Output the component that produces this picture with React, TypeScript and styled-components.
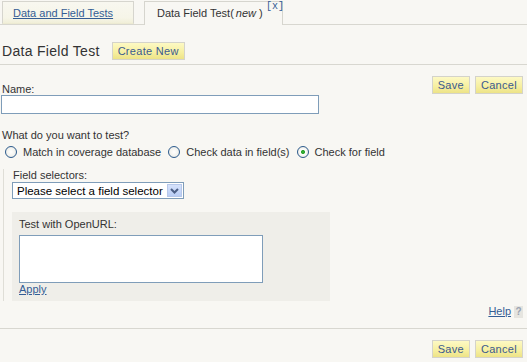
import styled, { createGlobalStyle } from 'styled-components';

const GlobalStyle = createGlobalStyle`
  html, body {
    margin: 0;
    background: #f8f7f3;
  }
  body {
    font-family: "Liberation Sans", Arial, sans-serif;
    font-size: 11px;
    color: #333;
  }
`;

const Page = styled.div`
  width: 527px;
  min-height: 362px;
`;

const TabBar = styled.div`
  display: flex;
  align-items: flex-end;
  gap: 10px;
  height: 25px;
  padding-left: 2px;
  border-bottom: 1px solid #d8d7d0;
  box-sizing: border-box;
`;

const Tab = styled.div<{ $active?: boolean }>`
  position: relative;
  box-sizing: border-box;
  width: ${p => (p.$active ? '139px' : '132px')};
  height: ${p => (p.$active ? '24px' : '23px')};
  margin-bottom: ${p => (p.$active ? '-1px' : '0')};
  padding: 5px 0 0 ${p => (p.$active ? '12px' : '10px')};
  line-height: 13px;
  border: 1px solid #d6d5ce;
  border-bottom: ${p => (p.$active ? 'none' : '1px solid #ecead2')};
  background: ${p =>
    p.$active ? '#f8f7f3' : 'linear-gradient(#f8f7f0 0%, #f6f5e8 75%, #f1efd8 100%)'};
  color: #333;
`;

const TabLink = styled.a`
  color: #345d95;
  text-decoration: underline;
`;

const NewMark = styled.i`
  margin-left: 2px;
`;

const CloseLink = styled.a`
  position: absolute;
  top: 0;
  right: -2px;
  font-family: "Liberation Mono", "Courier New", monospace;
  font-size: 10px;
  line-height: 10px;
  color: #345d95;
  text-decoration: none;
`;

const Header = styled.div`
  display: flex;
  align-items: center;
  gap: 12px;
  padding: 17px 0 4px 2px;
  border-bottom: 1px solid #d8d7d0;
`;

const Title = styled.h1`
  margin: 0;
  font-size: 14px;
  font-weight: normal;
  letter-spacing: 0.3px;
  color: #333;
  line-height: 18px;
`;

const Button = styled.button`
  box-sizing: border-box;
  height: 18px;
  padding: 0 5px;
  border: 1px solid #d4d3ca;
  background: linear-gradient(#fdf9c4 0%, #f6ef9f 60%, #ede387 100%);
  color: #3b5a8f;
  font-family: "Liberation Sans", Arial, sans-serif;
  font-size: 11px;
  letter-spacing: 0.3px;
  line-height: 16px;
  cursor: pointer;
`;

const ButtonGroup = styled.div`
  display: flex;
  gap: 5px;
`;

const Form = styled.div`
  padding: 11px 4px 0 1px;
`;

const NameRow = styled.div`
  display: flex;
  justify-content: space-between;
  align-items: flex-end;
`;

const Label = styled.label`
  display: block;
  line-height: 12px;
  padding-left: 1px;
`;

const TopButtons = styled(ButtonGroup)`
  margin-bottom: 1px;
`;

const TextInput = styled.input`
  display: block;
  box-sizing: border-box;
  width: 318px;
  height: 19px;
  margin: 0;
  border: 1px solid #7f9db9;
  background: #fff;
`;

const Question = styled.div`
  margin-top: 15px;
  padding-left: 1px;
  line-height: 13px;
`;

const RadioRow = styled.div`
  display: flex;
  gap: 7px;
  padding: 3px 0 0 4px;
`;

const RadioOption = styled.label`
  display: inline-flex;
  align-items: center;
  gap: 6px;
  line-height: 14px;
`;

const Radio = styled.input`
  appearance: none;
  width: 12px;
  height: 12px;
  margin: 0;
  border: 1px solid #2d5b8c;
  border-radius: 50%;
  background: radial-gradient(circle at 50% 50%, #fff 0%, #f3f3ee 55%, #d5dae2 100%);
  box-sizing: border-box;
  &:checked {
    background: radial-gradient(circle at 50% 50%, #39b83a 0%, #2aa02b 22%, #fff 34%, #f3f3ee 60%, #d5dae2 100%);
  }
`;

const FieldSection = styled.div`
  margin: 10px 0 0 2px;
  border-left: 1px solid #dfded7;
  padding-left: 8px;
`;

const SelectWrap = styled.div`
  position: relative;
  width: 172px;
  height: 17px;
  margin-top: 1px;
`;

const Select = styled.select`
  appearance: none;
  box-sizing: border-box;
  width: 100%;
  height: 100%;
  margin: 0;
  padding: 0 0 0 4px;
  border: 1px solid #7f9db9;
  background: #fff;
  color: #000;
  font-family: "Liberation Sans", Arial, sans-serif;
  font-size: 11.5px;
  border-radius: 0;
`;

const SelectArrow = styled.span`
  position: absolute;
  top: 2px;
  right: 2px;
  width: 15px;
  height: 13px;
  box-sizing: border-box;
  border: 1px solid #b7c8ea;
  background: linear-gradient(#d6e2fb, #b9cdf5);
  display: flex;
  align-items: center;
  justify-content: center;
  pointer-events: none;
`;

const UrlPanel = styled.div`
  width: 318px;
  box-sizing: border-box;
  margin-top: 13px;
  padding: 6px 7px 5px;
  background: #efeee9;
`;

const PanelLabel = styled.div`
  line-height: 13px;
`;

const UrlArea = styled.textarea`
  display: block;
  box-sizing: border-box;
  width: 244px;
  height: 48px;
  margin: 4px 0 0;
  border: 1px solid #7f9db9;
  background: #fff;
  resize: none;
`;

const PlainLink = styled.a`
  display: block;
  line-height: 13px;
  color: #345d95;
  text-decoration: underline;
`;

const HelpRow = styled.div`
  display: flex;
  justify-content: flex-end;
  align-items: center;
  gap: 3px;
  margin-top: 4px;
  padding-right: 4px;
  line-height: 13px;
`;

const HelpLink = styled.a`
  color: #345d95;
  text-decoration: underline;
`;

const HelpIcon = styled.span`
  display: inline-block;
  width: 9px;
  height: 12px;
  background: #e6e5e0;
  color: #9aa3b2;
  font-size: 10px;
  font-weight: bold;
  line-height: 12px;
  text-align: center;
`;

const Footer = styled.div`
  display: flex;
  justify-content: flex-end;
  margin-top: 10px;
  padding: 11px 4px 0 0;
  border-top: 1px solid #d8d7d0;
`;

export default function App() {
  return (
    <Page>
      <GlobalStyle />
      <TabBar>
        <Tab>
          <TabLink href="#">Data and Field Tests</TabLink>
        </Tab>
        <Tab $active>
          Data Field Test(<NewMark>new</NewMark> )
          <CloseLink href="#">[x]</CloseLink>
        </Tab>
      </TabBar>

      <Header>
        <Title>Data Field Test</Title>
        <Button>Create New</Button>
      </Header>

      <Form>
        <NameRow>
          <Label htmlFor="name">Name:</Label>
          <TopButtons>
            <Button>Save</Button>
            <Button>Cancel</Button>
          </TopButtons>
        </NameRow>
        <TextInput id="name" type="text" />

        <Question>What do you want to test?</Question>
        <RadioRow>
          <RadioOption>
            <Radio type="radio" name="kind" />
            Match in coverage database
          </RadioOption>
          <RadioOption>
            <Radio type="radio" name="kind" />
            Check data in field(s)
          </RadioOption>
          <RadioOption>
            <Radio type="radio" name="kind" defaultChecked />
            Check for field
          </RadioOption>
        </RadioRow>

        <FieldSection>
          <Label>Field selectors:</Label>
          <SelectWrap>
            <Select defaultValue="">
              <option value="">Please select a field selector</option>
            </Select>
            <SelectArrow>
              <svg width="9" height="6" viewBox="0 0 9 6">
                <path d="M1 1 L4.5 4.5 L8 1" fill="none" stroke="#4c5f86" strokeWidth="2" />
              </svg>
            </SelectArrow>
          </SelectWrap>

          <UrlPanel>
            <PanelLabel>Test with OpenURL:</PanelLabel>
            <UrlArea />
            <PlainLink href="#">Apply</PlainLink>
          </UrlPanel>
        </FieldSection>
      </Form>

      <HelpRow>
        <HelpLink href="#">Help</HelpLink>
        <HelpIcon>?</HelpIcon>
      </HelpRow>

      <Footer>
        <ButtonGroup>
          <Button>Save</Button>
          <Button>Cancel</Button>
        </ButtonGroup>
      </Footer>
    </Page>
  );
}
